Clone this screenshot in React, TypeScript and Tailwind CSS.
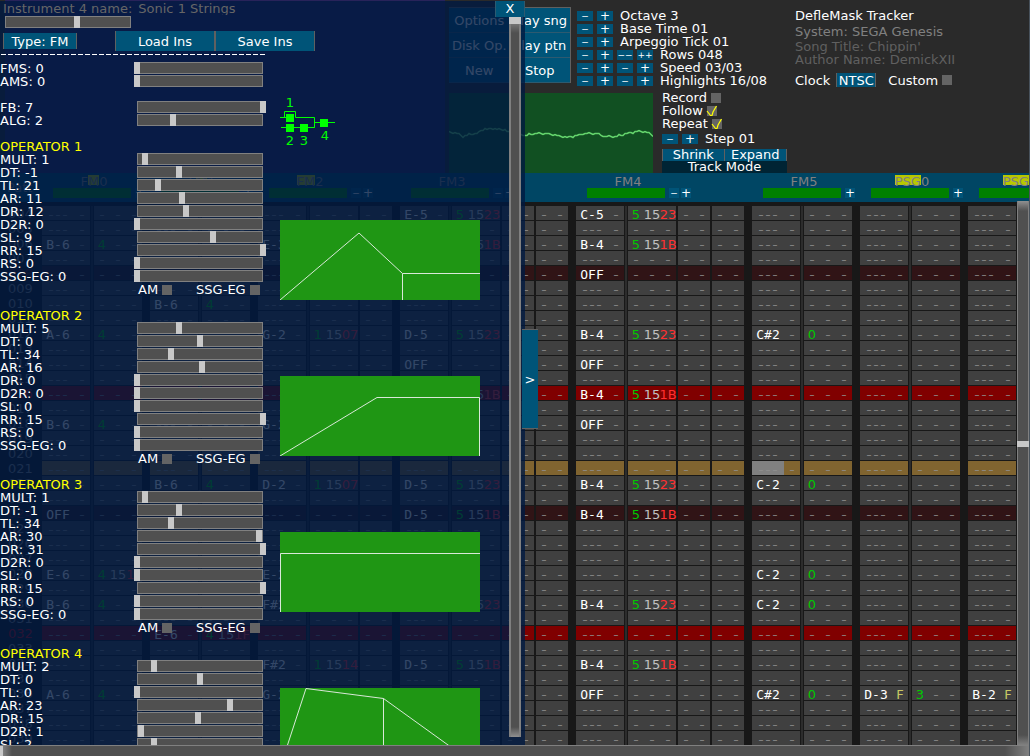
import React from "react";

/* ---------- data ---------- */

type Note = { note: string; vol?: string; ins?: string; fx?: string; val?: string };
type Channel = {
  name: string;
  effects: number;
  lit: number;
  from?: number;
  notes: Record<number, Note>;
};

const n = (note: string, ins?: string, fx?: string, val?: string): Note => ({ note, ins, fx, val });

const CHANNELS: Channel[] = [
  {
    name: "FM0", effects: 1, lit: 1, from: 1,
    notes: {
      6: n("B-6", "4"), 12: n("A-6", "4"), 18: n("B-6", "4"), 24: n("OFF"),
      28: n("E-6", "4", "15", "1F"), 30: n("B-6", "4"), 36: n("A-6", "4"),
    },
  },
  {
    name: "FM1", effects: 1, lit: 1, from: 1,
    notes: { 10: n("B-6", "4"), 22: n("B-6", "4"), 32: n("E-6", "4", "15", "1F") },
  },
  {
    name: "FM2", effects: 2, lit: 2,
    notes: {
      6: n("E-3"), 12: n("G-2", "1", "15", "07"), 18: n("G-2"), 22: n("D-2", "1", "15", "07"),
      28: n("E-2"), 30: n("F#2"), 34: n("F#2", "1", "15", "14"), 36: n("G-2"),
    },
  },
  {
    name: "FM3", effects: 3, lit: 0,
    notes: {
      4: n("E-5", "5", "15", "23"), 6: n("D-5", "5", "15", "1B"), 12: n("D-5", "5", "15", "23"),
      14: n("OFF"), 16: n("D-5", "5", "15", "1B"), 22: n("D-5", "5", "15", "23"),
      24: n("D-5", "5", "15", "1B"), 30: n("D-5", "5", "15", "23"), 34: n("D-5", "5", "15", "1B"),
    },
  },
  {
    name: "FM4", effects: 3, lit: 0,
    notes: {
      4: n("C-5", "5", "15", "23"), 6: n("B-4", "5", "15", "1B"), 8: n("OFF"),
      12: n("B-4", "5", "15", "23"), 14: n("OFF"), 16: n("B-4", "5", "15", "1B"), 18: n("OFF"),
      22: n("B-4", "5", "15", "23"), 24: n("B-4", "5", "15", "1B"), 30: n("B-4", "5", "15", "23"),
      34: n("B-4", "5", "15", "1B"), 36: n("OFF"),
    },
  },
  {
    name: "FM5", effects: 1, lit: 0,
    notes: { 12: n("C#2", "0"), 22: n("C-2", "0"), 28: n("C-2", "0"), 30: n("C-2", "0"), 36: n("C#2", "0") },
  },
  { name: "PSG0", effects: 1, lit: 3, notes: { 36: { note: "D-3", vol: "F", ins: "3" } } },
  { name: "PSG1", effects: 0, lit: 3, notes: { 36: { note: "B-2", vol: "F" } } },
];

const ROWS = Array.from({ length: 36 }, (_, i) => i + 4);
const CURRENT_ROW = 21;
const CURRENT_CHANNEL = "FM5";

const PARAMS: [string, number, number][] = [
  ["MULT", 0, 15], ["DT", -3, 3], ["TL", 0, 127], ["AR", 0, 31], ["DR", 0, 31],
  ["D2R", 0, 31], ["SL", 0, 15], ["RR", 0, 15], ["RS", 0, 3], ["SSG-EG", 0, 15],
];

const OPERATORS = [
  [1, -1, 21, 11, 12, 0, 9, 15, 0, 0],
  [5, 0, 34, 16, 0, 0, 0, 15, 0, 0],
  [1, -1, 34, 30, 31, 0, 0, 15, 0, 0],
  [2, 0, 0, 23, 15, 1, 2, 15, 0, 0],
];

const ENVELOPES = [
  "M0 80L79 13L122.5 53.5H200M122.5 53.5V80",
  "M0 80L97 21.5H199.5V80",
  "M0.5 80V21.5H200",
  "M0 80L26 .5L103.5 10.5L200 80M103.5 10.5V80",
];

/* ---------- small controls ---------- */

function Slider({ label, min, max, value }: { label: string; min: number; max: number; value: number }) {
  return (
    <div className="flex h-3 w-[126px] shrink-0 bg-[#505050] shadow-[inset_0_0_0_1px_#808080]">
      <input
        type="range"
        aria-label={label}
        min={min}
        max={max}
        defaultValue={value}
        className="-mx-[3px] block h-3 w-[132px] shrink-0 appearance-none bg-transparent [&::-webkit-slider-thumb]:h-3 [&::-webkit-slider-thumb]:w-[6px] [&::-webkit-slider-thumb]:appearance-none [&::-webkit-slider-thumb]:bg-[#c8c8c8]"
      />
    </div>
  );
}

function Check({ label, checked = false }: { label: string; checked?: boolean }) {
  return (
    <label className="flex h-[13px] items-center gap-1">
      {label}
      <span className="relative flex">
        <input type="checkbox" defaultChecked={checked} className="peer size-[10px] appearance-none bg-[#646464]" />
        <svg viewBox="0 0 10 10" className="pointer-events-none absolute inset-0 hidden size-[10px] overflow-visible peer-checked:block">
          <path d="M0 5L3.5 9.5L5 9.5L6 6L9.5 0" fill="none" stroke="#ffff00" strokeWidth="1.2" />
        </svg>
      </span>
    </label>
  );
}

function Steps({ keys, text }: { keys: string[]; text: string }) {
  return (
    <div className="flex h-[13px] items-center gap-1 whitespace-nowrap">
      {keys.map((k, i) => (
        <button
          key={i}
          aria-label={`${text} ${k}`}
          className={`flex h-[10px] w-4 items-center justify-center bg-[#005478] leading-[10px] ${k === "+" ? "text-[12px]" : "text-[9px]"}`}
        >
          {k.replaceAll("-", "−")}
        </button>
      ))}
      <span className="pl-[3px]">{text}</span>
    </div>
  );
}

/* ---------- header ---------- */

const MENU = [["Options", "Play sng"], ["Disk Op.", "Play ptn"], ["New", "Stop"]];

const WAVE = [
  [0, 39], [8, 40], [13, 43], [20, 41], [28, 40], [34, 36], [44, 35], [54, 36], [64, 40], [76, 42],
  [86, 40], [98, 40], [108, 42], [118, 44], [128, 42], [136, 40], [148, 40], [156, 43], [166, 43],
  [178, 40], [188, 38], [198, 39], [204, 42],
];

function Scope() {
  const points = Array.from({ length: 103 }, (_, i) => {
    const x = i * 2;
    const k = Math.max(1, WAVE.findIndex((p) => p[0] >= x));
    const [x0, y0] = WAVE[k - 1];
    const [x1, y1] = WAVE[k];
    const y = y0 + ((y1 - y0) * (x - x0)) / (x1 - x0) + (((i * 37) % 5) - 2) * 0.4;
    return `${x},${Math.round(y) + 0.5}`;
  }).join(" ");
  return (
    <svg viewBox="0 0 204 80" className="mt-[2px] block h-20 w-[204px] bg-[#115022]">
      <polyline points={points} fill="none" stroke="#64d46c" strokeWidth="1.5" />
    </svg>
  );
}

function Header() {
  return (
    <header className="flex">
      <div className="ml-[5px] w-[440px] shrink-0 bg-[#28235a]" />
      <div className="ml-1 shrink-0 pt-[7px]">
        <div className="mb-1 flex items-start gap-[6px]">
          <div className="grid w-[122px] grid-cols-2 border-r border-t border-[#606060]">
            {MENU.flat().map((m) => (
              <button key={m} className="h-[25px] border-b border-[#2d5a70] bg-[#005478] whitespace-nowrap">
                {m}
              </button>
            ))}
          </div>
          <div className="pt-[2px]">
            <Steps keys={["-", "+"]} text="Octave 3" />
            <Steps keys={["-", "+"]} text="Base Time 01" />
            <Steps keys={["-", "+"]} text="Arpeggio Tick 01" />
            <Steps keys={["-", "+", "--", "++"]} text="Rows 048" />
            <Steps keys={["-", "+", "-", "+"]} text="Speed 03/03" />
            <Steps keys={["-", "+", "-", "+"]} text="Highlights 16/08" />
          </div>
        </div>
        <div className="flex">
          <Scope />
          <div className="ml-[9px] w-[125px]">
            <Check label="Record" />
            <Check label="Follow" checked />
            <Check label="Repeat" checked />
            <div className="mt-[2px] mb-1">
              <Steps keys={["-", "+"]} text="Step 01" />
            </div>
            <div className="grid grid-cols-2">
              <button className="h-3 border-x border-[#606060] bg-[#005478] leading-3">Shrink</button>
              <button className="h-3 border-r border-[#606060] bg-[#005478] leading-3">Expand</button>
            </div>
            <button className="block h-3 w-full bg-[#002434] leading-3">Track Mode</button>
          </div>
        </div>
      </div>
      <div className="ml-[8px] pt-[9px] whitespace-nowrap">
        <h1>DefleMask Tracker</h1>
        <p className="mt-[3px] text-[#808080]">System: SEGA Genesis</p>
        <label className="mt-[2px] flex h-[13px] items-center gap-1 text-[#606060]">
          Song Title:
          <input defaultValue="Chippin'" className="h-[13px] w-24 bg-transparent" />
        </label>
        <label className="flex h-[13px] items-center gap-1 text-[#606060]">
          Author Name:
          <input defaultValue="DemickXII" className="h-[13px] w-24 bg-transparent" />
        </label>
        <div className="mt-[7px] flex h-[14px] items-center">
          <span>Clock</span>
          <button className="ml-[6px] h-[14px] w-10 border-x border-[#606060] bg-[#005478]">NTSC</button>
          <span className="ml-3">
            <Check label="Custom" />
          </span>
        </div>
      </div>
    </header>
  );
}

/* ---------- pattern table ---------- */

const widthOf = (c: Channel) =>
  c.effects === 0 ? "w-auto" : c.effects === 1 ? "w-[108px]" : c.effects === 2 ? "w-[142px]" : "w-[176px]";

function ChannelHead({ channel }: { channel: Channel }) {
  const start = channel.from ?? 0;
  const end = start + channel.lit;
  return (
    <th scope="col" className={`${widthOf(channel)} p-0 text-left align-top font-normal`}>
      <div className="ml-[11px] w-[82px] pt-[2px] text-[#808080]">
        <div className="flex h-[13px] justify-center">
          <span>{channel.name.slice(0, start)}</span>
          {channel.lit > 0 && (
            <span className="h-[10px] bg-[#b8c800] leading-[13px]">{channel.name.slice(start, end)}</span>
          )}
          <span>{channel.name.slice(end)}</span>
        </div>
      </div>
      <div className="ml-[11px] flex">
        <div className="h-[10px] w-[78px] shrink-0 bg-[#008000]" />
        {channel.effects > 0 && (
          <div className="ml-1 flex gap-[2px] leading-[10px] text-white">
            {channel.effects > 1 && (
              <button
                aria-label={`Remove ${channel.name} effect column`}
                className="flex size-[10px] items-center justify-center bg-[#005478] text-[9px]"
              >
                −
              </button>
            )}
            <button
              aria-label={`Add ${channel.name} effect column`}
              className="flex size-[10px] items-center justify-center bg-[#005478] text-[12px]"
            >
              +
            </button>
          </div>
        )}
      </div>
    </th>
  );
}

function Dashes({ count }: { count: number }) {
  return (
    <span className="flex gap-[2px] text-[10px] text-[#909090]">
      {Array.from({ length: count }, (_, i) => (
        <span key={i}>–</span>
      ))}
    </span>
  );
}

function Slot({ text, color }: { text?: string; color: string }) {
  return <span className={`flex w-4 justify-center ${color}`}>{text ?? <Dashes count={1} />}</span>;
}

function PatternCell({ channel, row }: { channel: Channel; row: number }) {
  const d = channel.notes[row];
  const bg =
    row === CURRENT_ROW ? "bg-[#806430]"
    : row % 16 === 0 ? "bg-[#800000]"
    : row % 8 === 0 ? "bg-[#301416]"
    : "bg-[#404040]";
  const cursor = row === CURRENT_ROW && channel.name === CURRENT_CHANNEL;
  const block = `flex h-[14px] leading-[18px] ${bg}`;
  return (
    <td className="p-0">
      <div className="flex h-[15px]">
        <div className={block}>
          <span className={cursor ? "flex w-8 justify-center bg-[#808080]" : "flex w-8 justify-center"}>
            {d ? (
              <span className="font-['DejaVu_Sans_Mono',monospace] text-[13px]">{d.note}</span>
            ) : (
              <Dashes count={3} />
            )}
          </span>
          <Slot text={d?.vol} color="text-[#c8c864]" />
        </div>
        {channel.effects > 0 && (
          <>
            <div className="mx-px h-[15px] w-[2px] bg-[#2c2c2c]" />
            <div className={block}>
              <Slot text={d?.ins} color="text-[#00c800]" />
              <Slot text={d?.fx} color="text-[#c0c0c0]" />
              <Slot text={d?.val} color="text-[#ff3030]" />
            </div>
          </>
        )}
        {Array.from({ length: Math.max(0, channel.effects - 1) }, (_, i) => (
          <div key={i} className={`ml-[2px] ${block}`}>
            <Slot color="text-white" />
            <Slot color="text-white" />
          </div>
        ))}
      </div>
    </td>
  );
}

function Pattern() {
  return (
    <div className="relative min-h-0 flex-1 overflow-hidden bg-[#181818]">
      <table className="w-full min-w-[1029px] table-fixed border-collapse">
        <thead className="bg-[#004664]">
          <tr className="h-[29px]">
            <th scope="col" className="w-[42px] p-0 pl-[7px] text-left font-normal text-[#808080]">Patt</th>
            {CHANNELS.map((c) => (
              <ChannelHead key={c.name} channel={c} />
            ))}
          </tr>
        </thead>
        <tbody>
          <tr className="h-1" aria-hidden="true"><td className="p-0" /></tr>
          {ROWS.map((r) => (
            <tr key={r} className="h-[15px]">
              <th
                scope="row"
                className={`p-0 pl-2 text-left font-normal ${r % 16 === 0 ? "text-[#c00000]" : r % 8 === 0 ? "text-[#601818]" : "text-[#808080]"}`}
              >
                {String(r).padStart(3, "0")}
              </th>
              {CHANNELS.map((c) => (
                <PatternCell key={c.name} channel={c} row={r} />
              ))}
            </tr>
          ))}
        </tbody>
      </table>
      <div className="absolute top-[28px] right-0 bottom-0 flex w-3 flex-col border-x border-[#808080] bg-[linear-gradient(#909090,#505050_10px,#505050_calc(100%_-_10px),#808080)]">
        <div className="flex-[240_1_0%]" />
        <div className="-mx-px h-[6px] bg-[#c8c8c8]" />
        <div className="flex-[298_1_0%]" />
      </div>
    </div>
  );
}

/* ---------- instrument panel ---------- */

function Param({ name, min, max, value }: { name: string; min: number; max: number; value: number }) {
  return (
    <div className="flex h-[13px]">
      <span className="w-[137px]">{name}: {value}</span>
      <Slider label={name} min={min} max={max} value={value} />
    </div>
  );
}

function Algorithm() {
  return (
    <svg viewBox="0 0 58 54" className="h-[54px] w-[58px] text-[13px]" fill="#00ff00">
      <path d="M0 21.5H6M4.5 21V15.5H15.5V21.5H34.5V31.5M1 31.5H34.5V26.5H55" fill="none" stroke="#00ff00" />
      <rect x="6" y="18" width="8" height="8" />
      <rect x="6" y="28" width="8" height="8" />
      <rect x="20" y="28" width="8" height="8" />
      <rect x="40" y="23" width="8" height="8" />
      <text x="10" y="11" textAnchor="middle">1</text>
      <text x="10" y="49" textAnchor="middle">2</text>
      <text x="24" y="49" textAnchor="middle">3</text>
      <text x="45" y="44" textAnchor="middle">4</text>
    </svg>
  );
}

function InstrumentPanel() {
  return (
    <aside className="absolute top-0 bottom-[11px] left-0 flex w-[525px] overflow-hidden border-t border-transparent bg-[#001941]/80 bg-clip-padding">
      <div className="min-w-0 flex-1 pt-px">
        <label className="flex h-[13px] items-center gap-[6px] pl-[3px] text-[#666666]">
          Instrument 4 name:
          <input defaultValue="Sonic 1 Strings" className="h-[13px] w-32 bg-transparent" />
        </label>
        <div className="mt-px ml-[5px]">
          <Slider label="Instrument" min={0} max={7} value={4} />
        </div>
        <div className="mt-[3px] flex h-5 items-center pl-[3px]">
          <button className="h-4 w-[74px] border-x border-[#606060] bg-[#005478]">Type: FM</button>
          <button className="ml-[38px] h-5 w-[100px] border-x border-[#606060] bg-[#005478]">Load Ins</button>
          <button className="h-5 w-[100px] border-x border-[#606060] bg-[#005478]">Save Ins</button>
        </div>
        <div className="mt-[3px] ml-px h-px w-[264px] bg-[repeating-linear-gradient(90deg,#fff_0_5px,transparent_5px_7px)]" />
        <div className="mt-[7px] flex">
          <div className="w-[280px] shrink-0">
            <Param name="FMS" min={0} max={7} value={0} />
            <Param name="AMS" min={0} max={3} value={0} />
            <div className="mt-[13px]">
              <Param name="FB" min={0} max={7} value={7} />
              <Param name="ALG" min={0} max={7} value={2} />
            </div>
            {OPERATORS.map((values, i) => (
              <section key={i} className="mt-[13px]">
                <h2 className="text-[#ffff00]">OPERATOR {i + 1}</h2>
                {PARAMS.map(([name, min, max], j) => (
                  <Param key={name} name={name} min={min} max={max} value={values[j]} />
                ))}
                <div className="flex gap-6 pl-[138px]">
                  <Check label="AM" />
                  <Check label="SSG-EG" />
                </div>
              </section>
            ))}
          </div>
          <div className="pt-[34px]">
            <Algorithm />
            <div className="mt-[70px] flex flex-col gap-[76px]">
              {ENVELOPES.map((d, i) => (
                <svg key={i} viewBox="0 0 200 80" className="h-20 w-[200px] bg-[#1f9614]">
                  <path d={d} fill="none" stroke="#d8e8d8" strokeWidth="1" />
                </svg>
              ))}
            </div>
          </div>
        </div>
      </div>
      <div className="mt-[16px] mr-1 mb-[8px] w-3 shrink-0 border-x-2 border-[#808080] bg-[linear-gradient(#909090,#505050_16px,#505050_calc(100%_-_10px),#909090)]">
        <div className="-mx-[2px] h-[7px] bg-[#c8c8c8]" />
      </div>
      <button aria-label="Close" className="absolute -top-px right-0 h-[17px] w-[30px] border-x border-[#2d5a70] bg-[#005478]">X</button>
    </aside>
  );
}

export default function App() {
  return (
    <main className="relative flex h-screen flex-col overflow-hidden border-r border-[#48525c] bg-[#2a2a2a] font-['DejaVu_Sans',sans-serif] text-[13px] leading-[13px] text-white">
      <Header />
      <Pattern />
      <div className="flex h-[11px] shrink-0 border-t border-[#808080] bg-[linear-gradient(90deg,#909090,#505050_12px,#505050_calc(100%_-_24px),#808080)]">
        <div className="w-[3px] bg-[#c8c8c8]" />
      </div>
      <InstrumentPanel />
      <button className="absolute top-[329px] left-[522px] h-[100px] w-4 border-y border-[#606060] bg-[#005478]">&gt;</button>
    </main>
  );
}
